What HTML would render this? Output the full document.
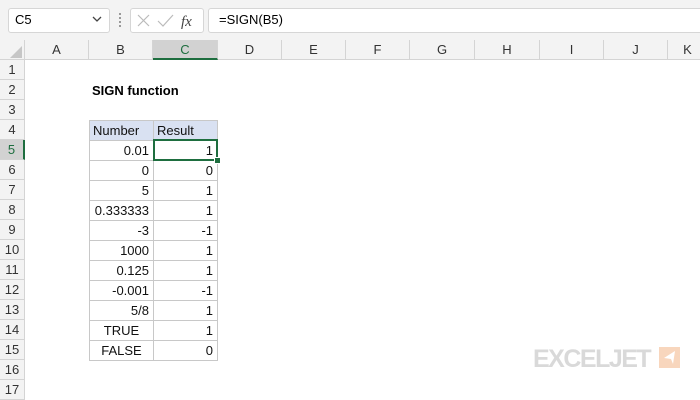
<!DOCTYPE html>
<html><head><style>
body{margin:0;width:700px;height:400px;overflow:hidden;background:#fff;font-family:"Liberation Sans",sans-serif;position:relative}
.abs{position:absolute}
.top{left:0;top:0;width:700px;height:40px;background:#f3f3f3}
.box{background:#fff;border:1px solid #d6d6d6;border-radius:3px}
.colh{top:40px;height:20px;background:#f3f3f3;border-bottom:1px solid #d4d4d4;border-right:1px solid #d4d4d4;font-size:13px;color:#333;text-align:center;line-height:20px;box-sizing:border-box}
.rowh{left:0;width:25px;height:20px;background:#f3f3f3;border-bottom:1px solid #d4d4d4;border-right:1px solid #d4d4d4;box-sizing:border-box;font-size:13px;color:#333;text-align:center;line-height:20px}
.c{position:absolute;height:21px;box-sizing:border-box;border:1px solid #c8c8c8;font-size:13px;line-height:19px;padding:0 4px;color:#111}
.b{left:89px;width:65px;text-align:right}
.cc{left:153px;width:65px;text-align:right}
</style></head><body>
<div class="abs top"></div>
<div class="abs box" style="left:8px;top:8px;width:100px;height:23px"></div>
<div class="abs" style="left:15px;top:12px;font-size:13px">C5</div>
<svg class="abs" style="left:92px;top:16px" width="10" height="7"><path d="M1 1L5 5L9 1" stroke="#444" fill="none" stroke-width="1.3"/></svg>
<div class="abs" style="left:119px;top:13px;width:2px;height:14px;border-left:2px dotted #999"></div>
<div class="abs box" style="left:130px;top:8px;width:72px;height:23px"></div>
<svg class="abs" style="left:136px;top:13px" width="60" height="16"><path d="M2 2L13 13M13 2L2 13" stroke="#bbb" stroke-width="1.2"/><path d="M22 8L27 13L37 2" stroke="#bbb" fill="none" stroke-width="1.2"/><text x="45" y="13" font-family="Liberation Serif" font-style="italic" font-size="15" fill="#444">fx</text></svg>
<div class="abs box" style="left:208px;top:8px;width:500px;height:23px"></div>
<div class="abs" style="left:219px;top:12px;font-size:13px">=SIGN(B5)</div>
<div class="abs colh" style="left:0;width:25px"></div>
<svg class="abs" style="left:10px;top:46px" width="12" height="12"><path d="M12 0L12 12L0 12Z" fill="#c6c6c6"/></svg>
<div class="abs colh" style="left:25px;width:64px">A</div>
<div class="abs colh" style="left:89px;width:64px">B</div>
<div class="abs colh" style="left:153px;width:65px;background:#d2d2d2;border-bottom:2px solid #1e6e3f;color:#1e6e3f">C</div>
<div class="abs colh" style="left:218px;width:64px">D</div>
<div class="abs colh" style="left:282px;width:64px">E</div>
<div class="abs colh" style="left:346px;width:64px">F</div>
<div class="abs colh" style="left:410px;width:65px">G</div>
<div class="abs colh" style="left:475px;width:65px">H</div>
<div class="abs colh" style="left:540px;width:64px">I</div>
<div class="abs colh" style="left:604px;width:64px">J</div>
<div class="abs colh" style="left:668px;width:40px">K</div>
<div class="abs rowh" style="top:60px">1</div>
<div class="abs rowh" style="top:80px">2</div>
<div class="abs rowh" style="top:100px">3</div>
<div class="abs rowh" style="top:120px">4</div>
<div class="abs rowh" style="top:140px;background:#d2d2d2;border-right:2px solid #1e6e3f;color:#1e6e3f">5</div>
<div class="abs rowh" style="top:160px">6</div>
<div class="abs rowh" style="top:180px">7</div>
<div class="abs rowh" style="top:200px">8</div>
<div class="abs rowh" style="top:220px">9</div>
<div class="abs rowh" style="top:240px">10</div>
<div class="abs rowh" style="top:260px">11</div>
<div class="abs rowh" style="top:280px">12</div>
<div class="abs rowh" style="top:300px">13</div>
<div class="abs rowh" style="top:320px">14</div>
<div class="abs rowh" style="top:340px">15</div>
<div class="abs rowh" style="top:360px">16</div>
<div class="abs rowh" style="top:380px">17</div>
<div class="abs" style="left:92px;top:83px;font-size:13px;font-weight:bold">SIGN function</div>

<div class="c" style="left:89px;width:65px;top:120px;background:#d9e1f2;padding-left:3px">Number</div>
<div class="c" style="left:153px;width:65px;top:120px;background:#d9e1f2;padding-left:3px">Result</div>
<div class="c b" style="top:140px">0.01</div><div class="c cc" style="top:140px">1</div>
<div class="c b" style="top:160px">0</div><div class="c cc" style="top:160px">0</div>
<div class="c b" style="top:180px">5</div><div class="c cc" style="top:180px">1</div>
<div class="c b" style="top:200px">0.333333</div><div class="c cc" style="top:200px">1</div>
<div class="c b" style="top:220px">-3</div><div class="c cc" style="top:220px">-1</div>
<div class="c b" style="top:240px">1000</div><div class="c cc" style="top:240px">1</div>
<div class="c b" style="top:260px">0.125</div><div class="c cc" style="top:260px">1</div>
<div class="c b" style="top:280px">-0.001</div><div class="c cc" style="top:280px">-1</div>
<div class="c b" style="top:300px">5/8</div><div class="c cc" style="top:300px">1</div>
<div class="c b" style="top:320px;text-align:center">TRUE</div><div class="c cc" style="top:320px">1</div>
<div class="c b" style="top:340px;text-align:center">FALSE</div><div class="c cc" style="top:340px">0</div>

<div class="abs" style="left:153px;top:139px;width:65px;height:22px;box-sizing:border-box;border:2px solid #1e6e3f"></div>
<div class="abs" style="left:214px;top:157px;width:5px;height:5px;background:#1e6e3f;border:1px solid #fff"></div>
<div class="abs" style="left:533px;top:345px;font-size:25px;font-weight:bold;color:#d9d9d9;letter-spacing:-1.5px">EXCELJET</div>
<div class="abs" style="left:659px;top:347px;width:21px;height:21px;background:#f8d6bd"></div>
<svg class="abs" style="left:659px;top:347px" width="21" height="21"><path d="M16 4L5 11L12 12L14 17Z" fill="#fff"/></svg>
</body></html>
